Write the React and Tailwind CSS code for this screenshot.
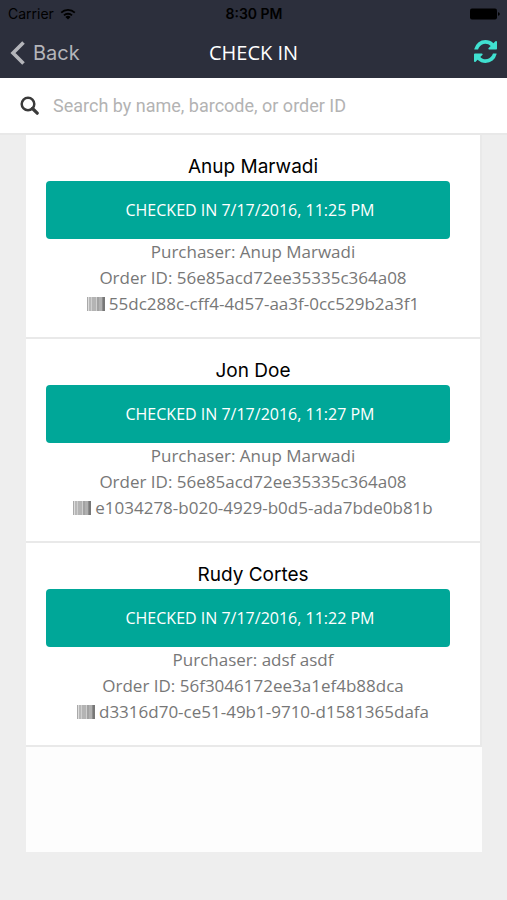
import React, { useState } from 'react';

const attendees = [
  {
    name: 'Anup Marwadi',
    checkedIn: '7/17/2016, 11:25 PM',
    purchaser: 'Anup Marwadi',
    orderId: '56e85acd72ee35335c364a08',
    barcode: '55dc288c-cff4-4d57-aa3f-0cc529b2a3f1',
  },
  {
    name: 'Jon Doe',
    checkedIn: '7/17/2016, 11:27 PM',
    purchaser: 'Anup Marwadi',
    orderId: '56e85acd72ee35335c364a08',
    barcode: 'e1034278-b020-4929-b0d5-ada7bde0b81b',
  },
  {
    name: 'Rudy Cortes',
    checkedIn: '7/17/2016, 11:22 PM',
    purchaser: 'adsf asdf',
    orderId: '56f3046172ee3a1ef4b88dca',
    barcode: 'd3316d70-ce51-49b1-9710-d1581365dafa',
  },
];

function WifiIcon() {
  return (
    <svg viewBox="0 0 16 12" className="w-4 h-3" fill="none" stroke="currentColor" strokeWidth="1.8" aria-hidden="true">
      <path d="M1.2 4.6a9.6 9.6 0 0 1 13.6 0" />
      <path d="M4 7.4a5.7 5.7 0 0 1 8 0" />
      <path d="M8 11.6 5.4 9a3.7 3.7 0 0 1 5.2 0z" fill="currentColor" stroke="none" />
    </svg>
  );
}

function BatteryIcon() {
  return (
    <svg viewBox="0 0 30 12" className="w-[30px] h-3" fill="currentColor" aria-hidden="true">
      <rect x="0" y="0.5" width="27" height="11" rx="2" />
      <path d="M28 4.2c1.4.3 1.8 1 1.8 1.8s-.4 1.5-1.8 1.8z" />
    </svg>
  );
}

function RefreshIcon() {
  return (
    <svg viewBox="0 0 1536 1536" className="w-[23px] h-[23px]" fill="currentColor" aria-hidden="true">
      <path d="M1511 928q0 5-1 7-64 268-268 434.5T764 1536q-146 0-282.5-55T238 1324l-129 129q-19 19-45 19t-45-19-19-45V960q0-26 19-45t45-19h448q26 0 45 19t19 45-19 45l-137 137q71 66 161 102t187 36q134 0 250-65t186-179q11-17 53-117 8-23 30-23h192q13 0 22.5 9.5t9.5 22.5zm25-800v448q0 26-19 45t-45 19h-448q-26 0-45-19t-19-45 19-45l138-138Q969 256 768 256q-134 0-250 65T332 500q-11 17-53 117-8 23-30 23H50q-13 0-22.5-9.5T18 608v-7q65-268 270-434.5T768 0q146 0 284 55.5T1297 212l130-129q19-19 45-19t45 19 19 45z" />
    </svg>
  );
}

function SearchIcon() {
  return (
    <svg viewBox="0 0 19 19" className="w-[19px] h-[19px] shrink-0 text-[#3a3a3a]" fill="none" stroke="currentColor" aria-hidden="true">
      <circle cx="8" cy="8" r="6.3" strokeWidth="2.5" />
      <path d="m12.5 12.5 4.7 4.7" strokeWidth="3.2" strokeLinecap="round" />
    </svg>
  );
}

function BarcodeIcon() {
  return (
    <svg viewBox="0 0 18 14" className="w-[18px] h-3.5 shrink-0" aria-hidden="true">
      <rect x="0" width="18" height="14" fill="#cfcfcf" />
      <rect x="0" width="1" height="14" fill="#aaaaaa" />
      <rect x="1" width="1" height="14" fill="#dddddd" />
      <rect x="2" width="2" height="14" fill="#b8b8b8" />
      <rect x="5" width="4" height="14" fill="#b4b4b4" />
      <rect x="10" width="2" height="14" fill="#a2a2a2" />
      <rect x="12" width="3" height="14" fill="#b0b0b0" />
      <rect x="15" width="1" height="14" fill="#8c8c8c" />
      <rect x="16" width="2" height="14" fill="#777777" />
    </svg>
  );
}

function StatusBar() {
  return (
    <div className="grid grid-cols-3 items-center h-7 pl-2 pr-[7px] text-sm text-black font-[Inter,sans-serif]">
      <div className="flex items-center gap-1.5">
        <span>Carrier</span>
        <WifiIcon />
      </div>
      <div className="text-center font-semibold">8:30 PM</div>
      <div className="flex justify-end">
        <BatteryIcon />
      </div>
    </div>
  );
}

function AttendeeItem({ attendee }) {
  return (
    <li className="bg-white border-b-2 border-r-2 border-[#e9e9e9] px-5 pt-[18px] pb-5 text-center">
      <h2 className="text-[19px] leading-7 text-black font-[Inter,sans-serif]">{attendee.name}</h2>
      <div className="pr-2.5">
        <button
          type="button"
          className="block w-full h-[58px] rounded-[4px] bg-[#00a798] pl-1 text-base text-white"
        >
          CHECKED IN {attendee.checkedIn}
        </button>
      </div>
      <div className="text-[17px] leading-[26px] text-[#777777] whitespace-nowrap">
        <p>Purchaser: {attendee.purchaser}</p>
        <p>Order ID: {attendee.orderId}</p>
        <p className="flex items-center justify-center gap-1">
          <BarcodeIcon />
          <span>{attendee.barcode}</span>
        </p>
      </div>
    </li>
  );
}

export default function App() {
  const [search, setSearch] = useState('');

  const visible = attendees.filter((a) =>
    [a.name, a.barcode, a.orderId].some((v) => v.toLowerCase().includes(search.toLowerCase()))
  );

  return (
    <div className="min-h-screen bg-[#eeeeee] font-['Open_Sans',sans-serif]">
      <header className="bg-[#2c2f3c]">
        <StatusBar />
        <nav className="grid grid-cols-3 items-center h-[50px] px-2.5">
          <a href="#back" className="flex items-center gap-2 text-xl text-[#b4b5ba] font-[Inter,sans-serif]">
            <svg viewBox="0 0 15 24" className="w-[15px] h-6" fill="none" stroke="currentColor" strokeWidth="3.6" aria-hidden="true">
              <path d="M13.5 1.5 3 12l10.5 10.5" />
            </svg>
            Back
          </a>
          <h1 className="text-center text-xl text-white whitespace-nowrap">CHECK IN</h1>
          <div className="flex justify-end">
            <button type="button" aria-label="Refresh" className="pb-1 text-[#40e0d0]">
              <RefreshIcon />
            </button>
          </div>
        </nav>
      </header>

      <label className="flex items-center gap-3.5 h-[57px] px-5 bg-white border-b-2 border-[#e8e8e8]">
        <SearchIcon />
        <input
          type="text"
          aria-label="Search attendees"
          placeholder="Search by name, barcode, or order ID"
          value={search}
          onChange={(e) => setSearch(e.target.value)}
          className="flex-1 min-w-0 text-lg text-[#333333] placeholder:text-[#b3b3b3] outline-none font-[Roboto,sans-serif]"
        />
      </label>

      <main className="ml-[26px] mr-[25px] pb-[47px]">
        <div className="bg-[#fdfdfd] pb-[105px]">
          <ul>
            {visible.map((attendee) => (
              <AttendeeItem key={attendee.barcode} attendee={attendee} />
            ))}
          </ul>
        </div>
      </main>
    </div>
  );
}
